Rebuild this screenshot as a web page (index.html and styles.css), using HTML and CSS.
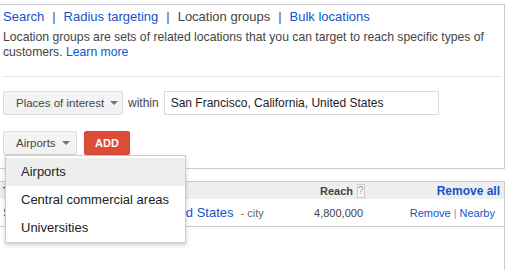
FILE: index.html
```html
<!DOCTYPE html>
<html lang="en">

<head>
  <meta charset="UTF-8">
  <title>Location groups</title>
  <link rel="stylesheet" href="styles.css">
</head>

<body>
  <div id="targeting-panel">
    <div class="tabs">
      <a href="#">Search</a><span class="sep">|</span><a href="#">Radius targeting</a><span class="sep">|</span><span class="current">Location groups</span><span class="sep">|</span><a href="#">Bulk locations</a>
    </div>
    <p class="desc">Location groups are sets of related locations that you can target to reach specific types of customers. <a href="#">Learn more</a></p>
    <div class="divider"></div>

    <div class="filter-row">
      <button class="btn btn-places">Places of interest <span class="caret"></span></button>
      <span class="within">within</span>
      <input type="text" class="place-input" value="San Francisco, California, United States">
    </div>

    <div class="filter-row second">
      <div class="menu-wrap">
        <button class="btn btn-group">Airports <span class="caret"></span></button>
        <!-- Open dropdown -->
        <ul class="menu">
          <li class="active">Airports</li>
          <li>Central commercial areas</li>
          <li>Universities</li>
        </ul>
      </div>
      <button class="btn btn-red">ADD</button>
    </div>
  </div>

  <div id="targeted-table">
    <div class="thead">
      <div class="col-name">Targeted locations</div>
      <div class="col-reach">Reach <span class="help">?</span></div>
      <div class="col-actions"><a href="#">Remove all</a></div>
    </div>
    <div class="trow">
      <div class="col-name"><a href="#">San Francisco, California, United States</a> <span class="type">- city</span></div>
      <div class="col-reach">4,800,000</div>
      <div class="col-actions"><a href="#">Remove</a><span class="bar">|</span><a href="#">Nearby</a></div>
    </div>
  </div>
</body>

</html>
```

FILE: styles.css
```css
body {
  font-family: 'Liberation Sans', Arial, sans-serif;
  margin: 0;
  color: #444;
  background: #fff;
}

a {
  color: #15c;
  text-decoration: none;
}

#targeting-panel {
  width: 505px;
  box-sizing: border-box;
  margin-top: 4px;
  border-top: 1px solid #ccc;
  border-right: 1px solid #ccc;
  border-bottom: 1px solid #ccc;
  padding: 4px 0 13px 0;
}

.tabs {
  padding-left: 3px;
  font-size: 13px;
  line-height: 16px;
  color: #444;
}

.tabs .sep {
  padding: 0 8px;
  color: #555;
}

.desc {
  margin: 5px 0 0 0;
  padding: 0 3px;
  font-size: 12.2px;
  line-height: 15px;
  color: #444;
}

.divider {
  margin: 16px 3px 0 3px;
  border-top: 1px solid #e5e5e5;
}

.filter-row {
  display: flex;
  align-items: center;
  margin-top: 14px;
  padding-left: 3px;
}

.filter-row.second {
  margin-top: 16px;
}

.btn {
  height: 24px;
  box-sizing: border-box;
  padding: 0 12px;
  font-family: 'Liberation Sans', Arial, sans-serif;
  font-size: 11.5px;
  color: #444;
  white-space: nowrap;
  background: linear-gradient(#f5f5f5, #f1f1f1);
  border: 1px solid #dcdcdc;
  border-radius: 2px;
  display: flex;
  align-items: center;
}

.caret {
  display: inline-block;
  margin-left: 6px;
  border-left: 4px solid transparent;
  border-right: 4px solid transparent;
  border-top: 4px solid #777;
}

.btn-places {
  width: 120px;
}

.within {
  margin-left: 5px;
  font-size: 12px;
  color: #444;
}

.place-input {
  margin-left: 5px;
  width: 275px;
  height: 24px;
  box-sizing: border-box;
  padding: 0 6px;
  border: 1px solid #d9d9d9;
  font-family: 'Liberation Sans', Arial, sans-serif;
  font-size: 12px;
  color: #222;
}

.menu-wrap {
  position: relative;
}

.btn-group {
  width: 74px;
}

.btn-red {
  margin-left: 7px;
  width: 46px;
  justify-content: center;
  background: #dd4b39;
  border-color: #d14836;
  color: #fff;
  font-size: 11px;
  font-weight: bold;
}

.menu {
  position: absolute;
  top: 24px;
  left: 2px;
  width: 181px;
  box-sizing: border-box;
  margin: 0;
  padding: 2px 0 0 0;
  list-style: none;
  background: #fff;
  border: 1px solid rgba(0, 0, 0, 0.2);
  box-shadow: 0 2px 4px rgba(0, 0, 0, 0.2);
  z-index: 10;
}

.menu li {
  height: 28px;
  line-height: 28px;
  padding-left: 15px;
  font-size: 13px;
  color: #222;
}

.menu li.active {
  background: #eee;
}

#targeted-table {
  width: 505px;
  box-sizing: border-box;
  margin-top: 12px;
  border-top: 1px solid #ccc;
  border-right: 1px solid #ccc;
  min-height: 100px;
}

.thead,
.trow {
  display: flex;
  align-items: center;
}

.thead {
  height: 17px;
  background: #eee;
  font-size: 11px;
  font-weight: bold;
  color: #444;
}

.trow {
  height: 27px;
  border-bottom: 1px solid #ccc;
  font-size: 11px;
}

.col-name {
  width: 300px;
  padding-left: 3px;
}

.trow .col-name a {
  font-size: 13px;
}

.type {
  margin-left: 4px;
  color: #666;
}

.col-reach {
  width: 60px;
  display: flex;
  align-items: center;
  justify-content: flex-end;
}

.thead .col-reach {
  justify-content: flex-start;
  padding-left: 17px;
  width: 43px;
}

.help {
  display: inline-block;
  width: 11px;
  height: 12px;
  margin-left: 4px;
  border: 1px solid #ccc;
  background: #f8f8f8;
  color: #999;
  font-weight: normal;
  font-size: 10px;
  line-height: 12px;
  text-align: center;
}

.col-actions {
  flex: 1;
  text-align: right;
  padding-right: 9px;
}

.thead .col-actions {
  padding-right: 4px;
}

.thead .col-actions a {
  font-size: 12px;
}

.bar {
  margin: 0 3px;
  color: #999;
}
```
